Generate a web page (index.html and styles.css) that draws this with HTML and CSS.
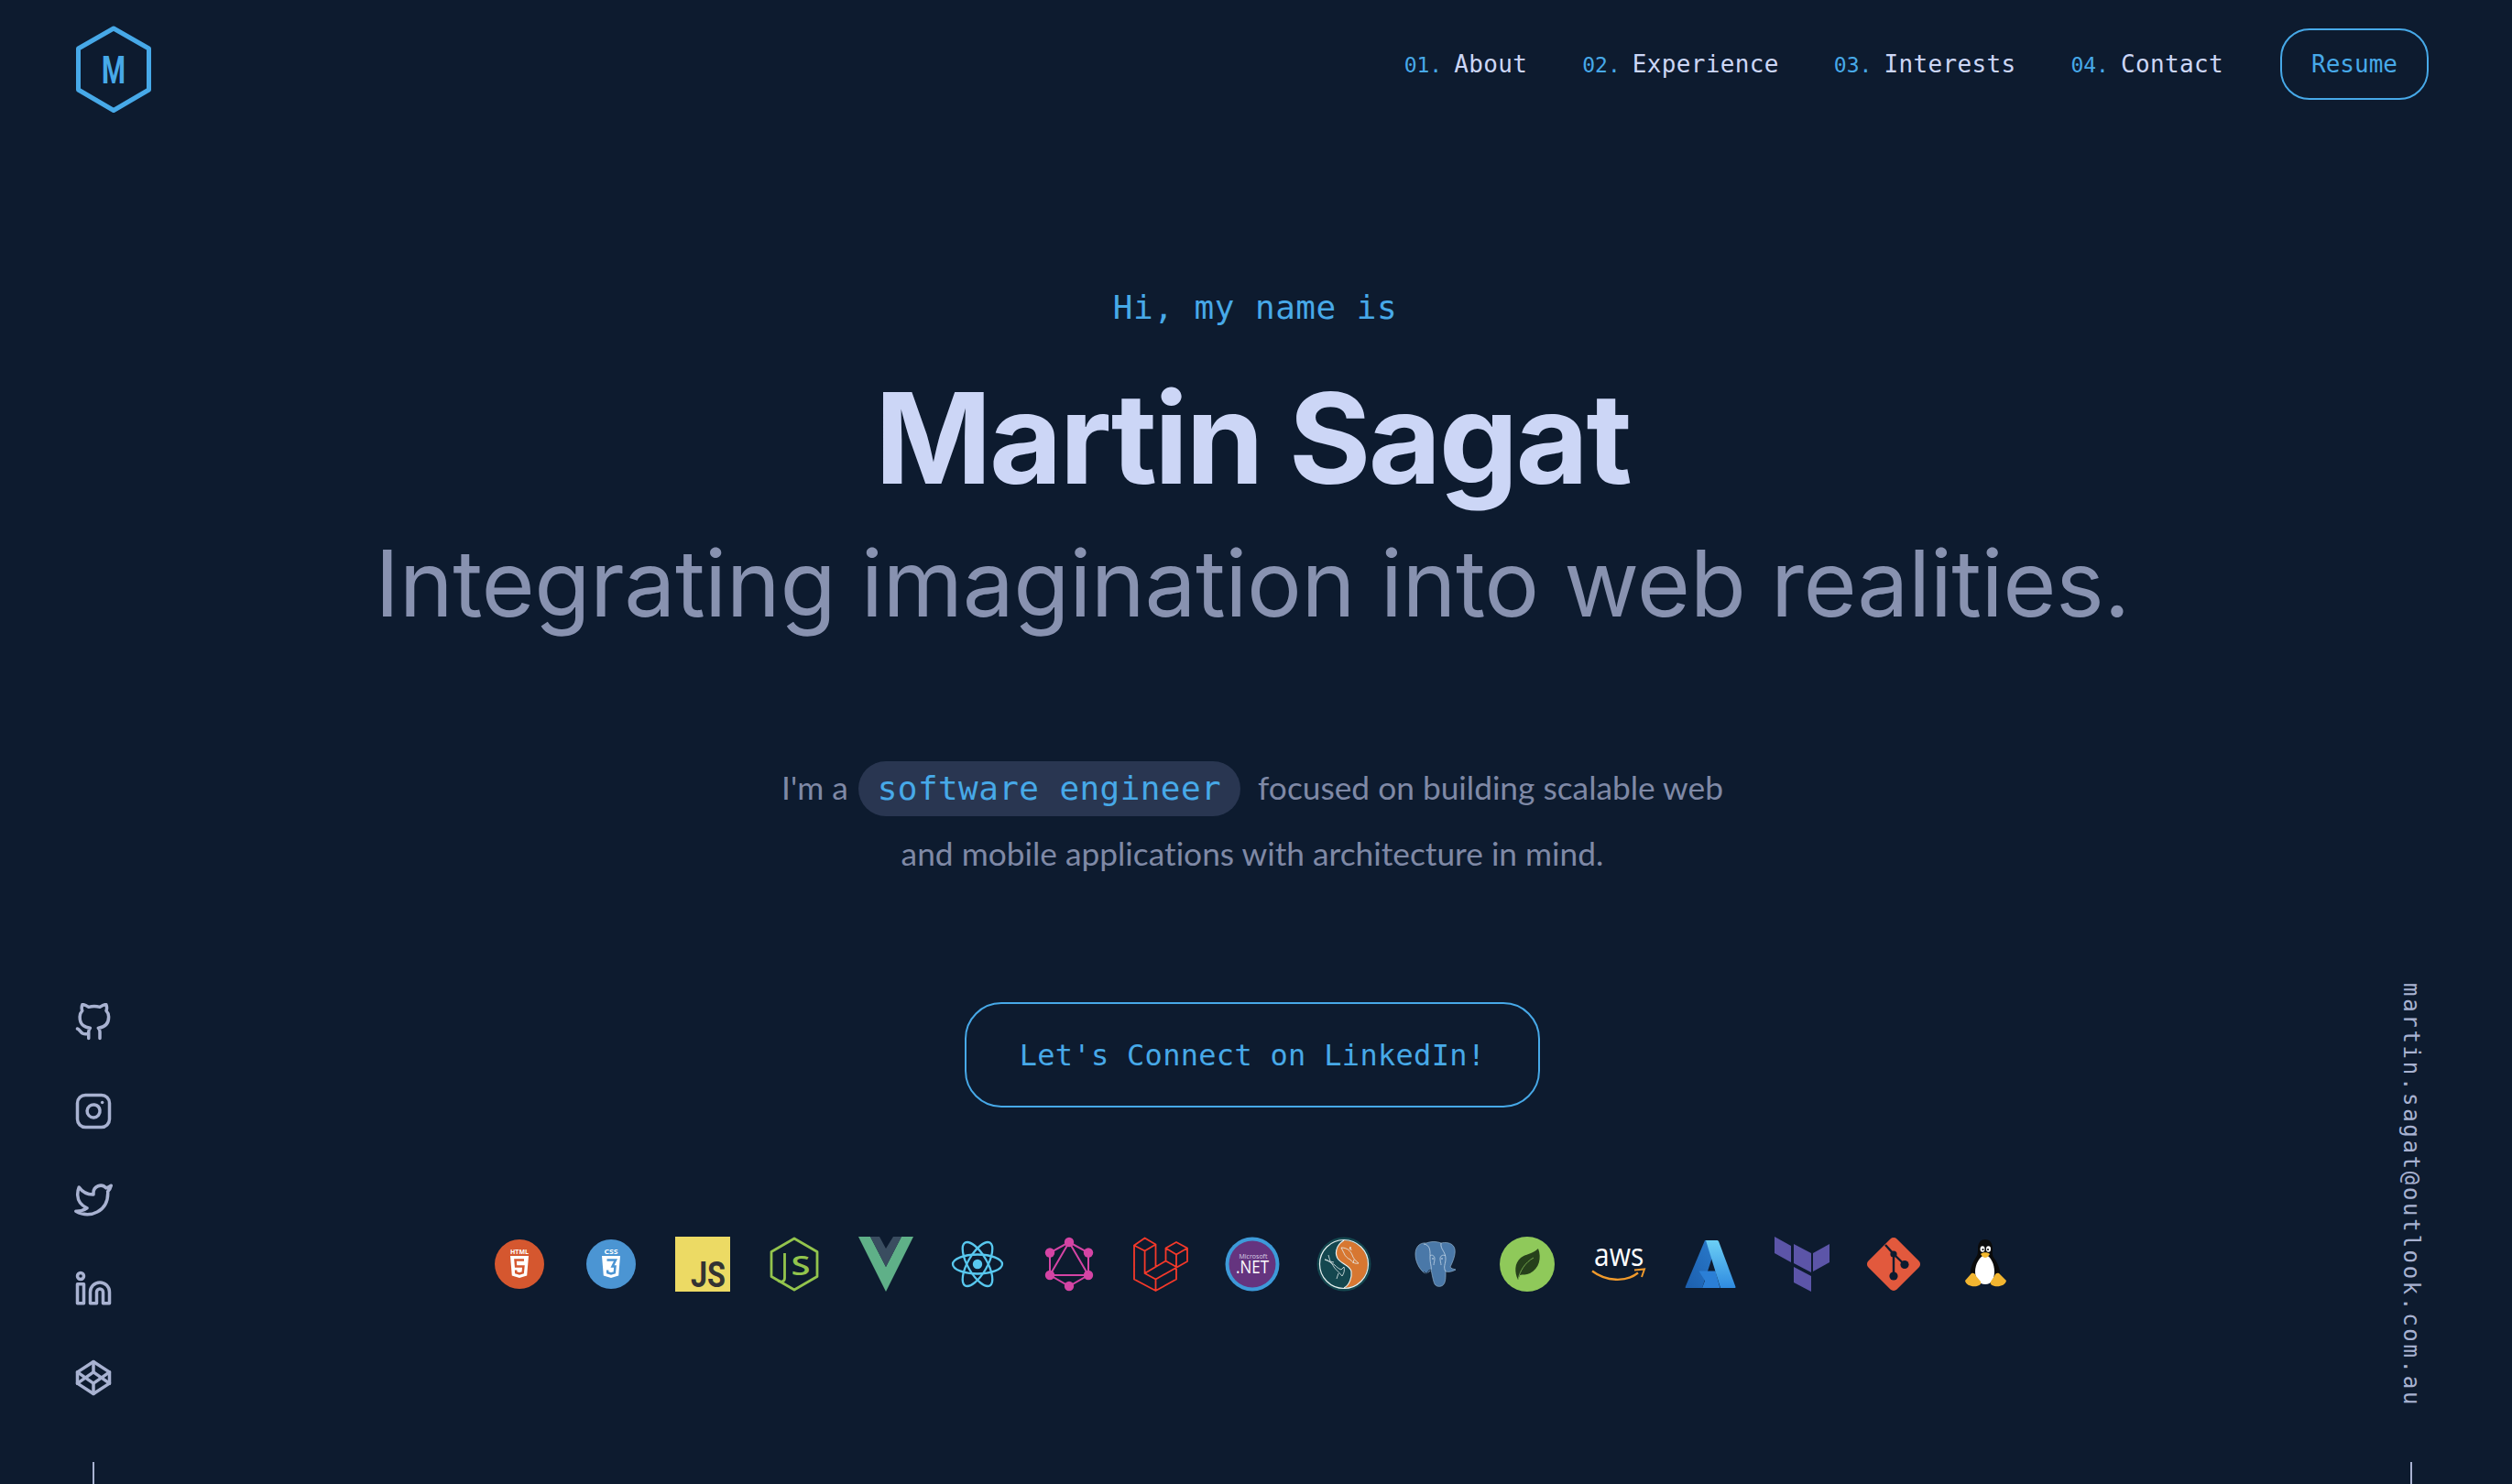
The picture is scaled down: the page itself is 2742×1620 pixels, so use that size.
FILE: index.html
```html
<!DOCTYPE html>
<html lang="en">
<head>
  <meta charset="UTF-8">
  <meta name="viewport" content="width=device-width, initial-scale=1.0">
  <title>Martin Sagat</title>
  <link rel="stylesheet" href="styles.css">
</head>
<body>
  <div class="page">

    <!-- Top bar -->
    <header class="topbar">
      <a class="logo" href="#">
        <svg width="84" height="98" viewBox="0 0 84 98">
          <polygon points="41,3 79.500,25 79.500,70 41,92.500 2.500,70 2.500,25" fill="none" stroke="#47a9e8" stroke-width="5" stroke-linejoin="round"/>
          <text class="logo-letter" x="41" y="63" text-anchor="middle" textLength="26" lengthAdjust="spacingAndGlyphs">M</text>
        </svg>
      </a>
      <nav class="nav">
        <a href="#"><span class="num">01.</span>About</a>
        <a href="#"><span class="num">02.</span>Experience</a>
        <a href="#"><span class="num">03.</span>Interests</a>
        <a href="#"><span class="num">04.</span>Contact</a>
        <a class="resume" href="#">Resume</a>
      </nav>
    </header>

    <div class="layout">

      <!-- Left rail: social icons -->
      <aside class="rail">
        <svg class="social" viewBox="0 0 24 24"><path d="M9 19c-5 1.500-5-2.500-7-3m14 6v-3.870a3.370 3.370 0 0 0-.94-2.610c3.140-.35 6.440-1.540 6.440-7A5.440 5.440 0 0 0 20 4.770 5.070 5.070 0 0 0 19.910 1S18.730.65 16 2.480a13.380 13.380 0 0 0-7 0C6.270.65 5.090 1 5.090 1A5.070 5.070 0 0 0 5 4.770a5.440 5.440 0 0 0-1.500 3.780c0 5.420 3.300 6.610 6.440 7A3.370 3.370 0 0 0 9 18.130V22"/></svg>
        <svg class="social" viewBox="0 0 24 24"><rect x="2" y="2" width="20" height="20" rx="5"/><path d="M16 11.370A4 4 0 1 1 12.630 8 4 4 0 0 1 16 11.370z"/><line x1="17.500" y1="6.500" x2="17.510" y2="6.500"/></svg>
        <svg class="social" viewBox="0 0 24 24"><path d="M23 3a10.900 10.900 0 0 1-3.140 1.530 4.480 4.480 0 0 0-7.860 3v1A10.660 10.660 0 0 1 3 4s-4 9 5 13a11.640 11.640 0 0 1-7 2c9 5 20 0 20-11.500a4.500 4.500 0 0 0-.08-.83A7.720 7.720 0 0 0 23 3z"/></svg>
        <svg class="social" viewBox="0 0 24 24"><path d="M16 8a6 6 0 0 1 6 6v7h-4v-7a2 2 0 0 0-2-2 2 2 0 0 0-2 2v7h-4v-7a6 6 0 0 1 6-6z"/><rect x="2" y="9" width="4" height="12"/><circle cx="4" cy="4" r="2"/></svg>
        <svg class="social" viewBox="0 0 24 24"><polygon points="12 2 22 8.500 22 15.500 12 22 2 15.500 2 8.500 12 2"/><line x1="12" y1="22" x2="12" y2="15.500"/><polyline points="22 8.500 12 15.500 2 8.500"/><polyline points="2 15.500 12 8.500 22 15.500"/><line x1="12" y1="2" x2="12" y2="8.500"/></svg>
        <div class="rail-line rail-line-left"></div>
      </aside>

      <!-- Hero -->
      <main class="hero">
        <p class="hello">Hi, my name is</p>
        <h1 class="name">Martin Sagat</h1>
        <h2 class="tagline">Integrating imagination into web realities.</h2>
        <p class="intro">
          <span class="intro-line">I'm a <code class="pill">software engineer</code> focused on building scalable web</span>
          <span class="intro-line">and mobile applications with architecture in mind.</span>
        </p>
        <a class="connect" href="#">Let's Connect on LinkedIn!</a>

        <div class="tech">
          <!-- html -->
          <svg viewBox="0 0 60 60"><circle cx="30" cy="30" r="27" fill="#d5572f"/><text class="t-small" x="30" y="18.500" text-anchor="middle" textLength="20" lengthAdjust="spacingAndGlyphs">HTML</text><path d="M20 21h20l-1.800 21.500L30 45l-8.200-2.500z" fill="#fff"/><path d="M35 25.500H25.500l.6 7h8.300l-.7 6.800-3.700 1.200-3.700-1.200-.2-2.800" fill="none" stroke="#d5572f" stroke-width="2.500"/></svg>
          <!-- css -->
          <svg viewBox="0 0 60 60"><circle cx="30" cy="30" r="27" fill="#4b95d3"/><text class="t-small" x="30" y="18.500" text-anchor="middle" textLength="15" lengthAdjust="spacingAndGlyphs">CSS</text><path d="M20 21h20l-1.800 21.500L30 45l-8.200-2.500z" fill="#fff"/><path d="M25.500 25.500H35l-3.500 7h3l-.7 6.800-3.800 1.200-3.700-1.200-.2-2.800" fill="none" stroke="#4b95d3" stroke-width="2.500"/></svg>
          <!-- js -->
          <svg viewBox="0 0 60 60"><rect width="60" height="60" fill="#ecda64"/><text class="t-js" x="55" y="55" text-anchor="end" textLength="38" lengthAdjust="spacingAndGlyphs">JS</text></svg>
          <!-- node -->
          <svg viewBox="0 0 60 60"><path d="M30 2L55 16.500V43.500L30 58 5 43.500V16.500z" fill="none" stroke="#93c44d" stroke-width="2.800" stroke-linejoin="round"/><path d="M19.500 18V45c0 4.500-4 5-7 3" fill="none" stroke="#93c44d" stroke-width="2.800"/><text class="t-node" x="37" y="42" text-anchor="middle" textLength="21" lengthAdjust="spacingAndGlyphs">S</text></svg>
          <!-- vue -->
          <svg viewBox="0 0 60 60"><polygon points="0,0 13,0 30,33 47,0 60,0 30,60" fill="#5fb088"/><polygon points="13,0 23,0 30,13 38,0 47,0 30,33" fill="#3a4d60"/></svg>
          <!-- react -->
          <svg viewBox="0 0 60 60"><g fill="none" stroke="#58c8ef" stroke-width="2.300"><ellipse cx="30" cy="30" rx="27" ry="10.500"/><ellipse cx="30" cy="30" rx="27" ry="10.500" transform="rotate(60 30 30)"/><ellipse cx="30" cy="30" rx="27" ry="10.500" transform="rotate(120 30 30)"/></g><circle cx="30" cy="30" r="5.200" fill="#58c8ef"/></svg>
          <!-- graphql -->
          <svg viewBox="0 0 60 60"><g fill="none" stroke="#d444a4" stroke-width="2"><polygon points="30,6 51,17.500 51,42 30,54 9,42 9,17.500"/><polygon points="30,6 51,42 9,42"/></g><g fill="#d444a4"><circle cx="30" cy="6" r="5.200"/><circle cx="51" cy="17.500" r="5.200"/><circle cx="51" cy="42" r="5.200"/><circle cx="30" cy="54" r="5.200"/><circle cx="9" cy="42" r="5.200"/><circle cx="9" cy="17.500" r="5.200"/></g></svg>
          <!-- laravel -->
          <svg viewBox="0 0 60 60"><path d="M1 9.500L12.600 1.500 24.500 8.500 12.600 15.500zM1 9.500V46.500L24.500 59 47 46.500V33M12.600 15.500V40M24.500 8.500V33L12.600 40l11.900 6.500V59M24.500 46.500L59 27V12.500L47 6 35.500 12.500V26.500L12.600 40M35.500 12.500L47 19.500 59 12.500M47 19.500V33L35.500 26.500" fill="none" stroke="#f5392a" stroke-width="1.800" stroke-linejoin="round"/></svg>
          <!-- .net -->
          <svg viewBox="0 0 60 60"><circle cx="30" cy="30" r="29.500" fill="#3d9ad9"/><circle cx="30" cy="30" r="25.500" fill="#65347f"/><text class="t-ms" x="31" y="24" text-anchor="middle" textLength="31" lengthAdjust="spacingAndGlyphs">Microsoft</text><text class="t-net" x="30" y="40" text-anchor="middle" textLength="36" lengthAdjust="spacingAndGlyphs">.NET</text></svg>
          <!-- mysql -->
          <svg viewBox="0 0 60 60"><circle cx="30" cy="30" r="29.500" fill="#14474f"/><path d="M30 4A26 26 0 0 1 30 56C36 53 39 44 38 38 37 32 28 30 24 25 20 20 20 10 30 4z" fill="#d77731"/><circle cx="30" cy="30" r="26.500" fill="none" stroke="#e8f2f2" stroke-width="1.200"/><path d="M30 4C20 10 20 20 24 25 28 30 37 32 38 38 39 44 36 53 30 56" fill="none" stroke="#e8f2f2" stroke-width="1.200"/><g fill="none" stroke="#e6efef" stroke-width=".8"><path d="M27 12c6 0 10 3 12 8 1 3 3 6 7 9-4 1-7-1-9-4-3-1-6-4-7-7-1-2-2-4-3-6zM36 14l1-3 1 4M41 25l-1 4"/><path d="M9 25c4 0 8 4 10 8 2 3 5 5 9 10 2-3 3-6 2-10l-3 3c-3-1-5-3-7-5-3-2-6-4-11-6zM13 20l2 7 4 1M24 40l-2 6"/></g></svg>
          <!-- postgres -->
          <svg viewBox="0 0 60 60"><path d="M20 7C12 6 8 12 8 19 8 27 12 35 17 39 20 41 23 39 25 36 26 40 27 46 28 49 29 54 33 55 36 54 40 53 41 48 41 42V38C44 39 49 38 52 36 49 35 47 35 46 33 50 25 53 16 50 11 47 6 40 6 36 7 31 5 25 5 20 7z" fill="#4a78a8" stroke="#8fb0cc" stroke-width=".7"/><g fill="none" stroke="#c3d6e8" stroke-width=".8"><path d="M17 8C25 9 24 17 24 23 24 30 26 33 25 36M24 21c2-2 5 0 5 3 0 3-1 5-1 7M36 7C35 14 41 16 41 24 41 30 38 33 41 38M41 21c-3-2-6 0-6 3 0 3 1 5 1 7"/></g><path d="M22 40c-1-2 0-3 3-4M17 38c1 1 2 2 4 2" fill="none" stroke="#16263a" stroke-width="1"/><circle cx="27" cy="24" r=".8" fill="#dfe9f2"/><circle cx="37" cy="24" r=".8" fill="#dfe9f2"/></svg>
          <!-- spring -->
          <svg viewBox="0 0 60 60"><circle cx="30" cy="30" r="30" fill="#8fc95a"/><path d="M42 13c4 10 1 22-9 27-4 2-8 1-11 2l-2 5c-4-8-4-18 3-24 5-4 13-4 19-10z" fill="#26401b"/><path d="M20 47C22 37 28 28 37 23" fill="none" stroke="#71a24a" stroke-width="1"/></svg>
          <!-- aws -->
          <svg viewBox="0 0 60 60"><text class="t-aws" transform="translate(3 32) scale(1 1.150)">aws</text><path d="M1 37.500C16 49 38 50 51 39.500" fill="none" stroke="#f09a2c" stroke-width="2.300"/><path d="M47 36.500L58 35.500 55 44" fill="none" stroke="#f09a2c" stroke-width="2"/></svg>
          <!-- azure -->
          <svg viewBox="0 0 60 60"><defs><linearGradient id="az1" x1="0" y1="1" x2="1" y2="0"><stop offset="0" stop-color="#1c5fae"/><stop offset="1" stop-color="#2a7bcc"/></linearGradient><linearGradient id="az2" x1="0" y1="0" x2="0" y2="1"><stop offset="0" stop-color="#6ccff5"/><stop offset="1" stop-color="#2f8be0"/></linearGradient></defs><path d="M24 4h14L21 56H3.500c-1 0-1-.5-.7-1.500z" fill="url(#az1)"/><path d="M17.500 37.500h18l5 18.500H21l3-8z" fill="#2b7fd6"/><path d="M25 4h12c1 0 1.800.5 2.200 1.500L57.400 54.500c.3 1-.2 1.500-1 1.500H41z" fill="url(#az2)"/></svg>
          <!-- terraform -->
          <svg viewBox="0 0 60 60" fill="#5c55a8"><polygon points="0,0 18,10 18,28 0,18"/><polygon points="21,8 40,18 40,39 21,29"/><polygon points="42,18 60,8 60,28 42,38"/><polygon points="21,33 40,43 40,60 21,50"/></svg>
          <!-- git -->
          <svg viewBox="0 0 60 60"><rect x="8" y="8" width="44" height="44" rx="5" transform="rotate(45 30 30)" fill="#e2593d"/><path d="M21 9l9 10v24M30 19l12 11.500" fill="none" stroke="#0d1b2f" stroke-width="2.400"/><circle cx="30" cy="19" r="3.600" fill="#0d1b2f"/><circle cx="42" cy="30.500" r="4.600" fill="#0d1b2f"/><circle cx="30" cy="43" r="4.600" fill="#0d1b2f"/></svg>
          <!-- linux -->
          <svg viewBox="0 0 60 60"><path d="M30 3c-6 0-8 5-8 10 0 5 0 7-3 11-3 5-6 12-5 19l2 8h28l2-8c1-6-2-14-6-19-3-4-2-7-2-11 0-6-3-10-8-10z" fill="#0b0b0b"/><path d="M30 20c-6 1-11 10-11 18 0 8 4 14 11 14s10-6 10-14c0-8-4-17-10-18z" fill="#fff"/><ellipse cx="27" cy="13.500" rx="2.500" ry="3.200" fill="#fff"/><ellipse cx="33.500" cy="13.500" rx="2.500" ry="3.200" fill="#fff"/><circle cx="27.500" cy="14" r="1.100" fill="#111"/><circle cx="33" cy="14" r="1.100" fill="#111"/><path d="M25 19c2-2.500 8-2.500 10 0-2 3-3.500 4-5 4s-3-1-5-4z" fill="#f4b92f"/><path d="M8 48l7-8c2-1 4 0 5 3l5 6c1 3-1 4-4 5-6 1-12-1-13-6zM53 48l-8-8c-2-1-4 0-5 3l-4 6c-1 3 1 4 4 5 6 1 12-1 13-6z" fill="#f2b530"/></svg>
        </div>
      </main>

      <!-- Right rail: email -->
      <aside class="rail rail-right">
        <a class="email" href="#">martin.sagat@outlook.com.au</a>
        <div class="rail-line"></div>
      </aside>
    </div>
  </div>
</body>
</html>
```

FILE: styles.css
```css
* {
  box-sizing: border-box;
}

html, body {
  margin: 0;
  height: 100%;
}

body {
  background-color: #0d1b2f;
  font-family: Inter, "Open Sans", sans-serif;
  overflow: hidden;
}

a {
  color: inherit;
  text-decoration: none;
}

.page {
  display: flex;
  flex-direction: column;
  height: 100vh;
}

/* Top bar */
.topbar {
  display: flex;
  justify-content: space-between;
  align-items: flex-start;
  padding: 28px 91px 0 83px;
  height: 152px;
  flex-shrink: 0;
}

.logo {
  display: block;
  height: 98px;
}

.logo-letter {
  font-family: Roboto, sans-serif;
  font-size: 43px;
  font-weight: 700;
  fill: #47a9e8;
}

.nav {
  display: flex;
  align-items: center;
  gap: 60px;
  padding-top: 3px;
  font-family: "DejaVu Sans Mono", monospace;
  font-size: 26px;
  letter-spacing: .35px;
  color: #ccd6f6;
}

.num {
  color: #47a9e8;
  font-size: 23px;
  letter-spacing: 0;
  margin-right: 13px;
}

.resume {
  display: flex;
  align-items: center;
  justify-content: center;
  width: 162px;
  height: 78px;
  margin-left: 2px;
  border: 2px solid #47a9e8;
  border-radius: 32px;
  letter-spacing: 0;
  color: #47a9e8;
}

/* Three column page body */
.layout {
  flex: 1;
  display: grid;
  grid-template-columns: 204px 1fr 212px;
  min-height: 0;
}

.rail {
  display: flex;
  flex-direction: column;
  align-items: center;
  justify-content: flex-end;
}

.rail-right {
  padding-right: 8px;
}

.social {
  width: 42px;
  height: 42px;
  margin-bottom: 55px;
  fill: none;
  stroke: #a8b2d1;
  stroke-width: 2;
  stroke-linecap: round;
  stroke-linejoin: round;
}

.rail-line {
  width: 2px;
  height: 24px;
  background-color: #a8b2d1;
}

.rail-line-left {
  margin-top: 16px;
}

.email {
  writing-mode: vertical-rl;
  font-family: "DejaVu Sans Mono", monospace;
  font-size: 24px;
  letter-spacing: 2.700px;
  color: #a8b2d1;
  margin-bottom: 60px;
}

/* Hero */
.hero {
  display: flex;
  flex-direction: column;
  align-items: center;
  text-align: center;
  padding-top: 160px;
}

.hello {
  margin: 0;
  padding-left: 6px;
  font-family: "DejaVu Sans Mono", monospace;
  font-size: 36px;
  line-height: 48px;
  letter-spacing: .5px;
  color: #47a9e8;
}

.name {
  margin: 43px 0 0;
  font-size: 137px;
  line-height: 150px;
  font-weight: 700;
  letter-spacing: -2.700px;
  color: #ccd6f6;
}

.tagline {
  margin: 19px 0 0;
  font-size: 100px;
  line-height: 130px;
  font-weight: 400;
  letter-spacing: -.5px;
  color: #8892b0;
}

.intro {
  margin: 122px 0 0;
  font-family: Lato, sans-serif;
  font-size: 35.300px;
  line-height: 72px;
  font-variant-ligatures: none;
  color: #7f89a6;
}

.intro-line {
  display: block;
}

.pill {
  display: inline-block;
  font-family: "DejaVu Sans Mono", monospace;
  font-size: 36px;
  line-height: 60px;
  letter-spacing: .4px;
  padding: 0 21px;
  margin: 0 10px 0 2px;
  border-radius: 30px;
  background-color: #293651;
  color: #47a9e8;
}

.connect {
  display: flex;
  align-items: center;
  justify-content: center;
  width: 628px;
  height: 115px;
  margin-top: 126px;
  border: 2px solid #47a9e8;
  border-radius: 40px;
  font-family: "DejaVu Sans Mono", monospace;
  font-size: 32px;
  letter-spacing: .3px;
  color: #47a9e8;
}

/* Row of tech logos */
.tech {
  display: flex;
  gap: 40px;
  margin-top: 141px;
}

.tech svg {
  display: block;
  width: 60px;
  height: 60px;
  overflow: visible;
}

.t-small {
  font-family: "Open Sans", sans-serif;
  font-size: 7.500px;
  font-weight: 700;
  fill: #fff;
}

.t-js {
  font-family: Roboto, sans-serif;
  font-size: 39px;
  font-weight: 700;
  fill: #333;
}

.t-node {
  font-family: "Open Sans", sans-serif;
  font-size: 28px;
  font-weight: 600;
  fill: #93c44d;
}

.t-ms {
  font-family: "Open Sans", sans-serif;
  font-size: 6.500px;
  fill: #d9cfe3;
}

.t-net {
  font-family: "Open Sans", sans-serif;
  font-size: 20px;
  fill: #fff;
}

.t-aws {
  font-family: "Open Sans", sans-serif;
  font-size: 30px;
  fill: #fff;
}
```
